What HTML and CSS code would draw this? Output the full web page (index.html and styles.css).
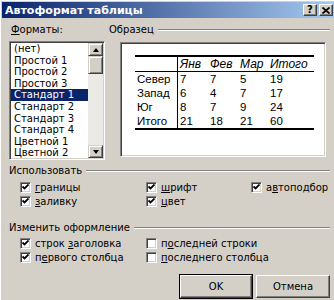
FILE: index.html
```html
<!doctype html>
<html>
<head>
  <link rel="stylesheet" href="styles.css">
</head>
<body>
  <div class="dialog">
    <div class="titlebar">
      <span class="title">Автоформат таблицы</span>
      <div class="tbtns">
        <span class="tbtn help">?</span>
        <span class="tbtn close">
          <svg width="8" height="7" viewBox="0 0 8 7"><path d="M0.5 0.5 L7.5 6.5 M7.5 0.5 L0.5 6.5" stroke="#000" stroke-width="1.7"/></svg>
        </span>
      </div>
    </div>

    <div class="content">
      <div class="top">
        <div class="formats">
          <div class="label"><u>Ф</u>орматы:</div>
          <div class="listbox">
            <ul class="items">
              <li>(нет)</li>
              <li>Простой 1</li>
              <li>Простой 2</li>
              <li>Простой 3</li>
              <li class="selected">Стандарт 1</li>
              <li>Стандарт 2</li>
              <li>Стандарт 3</li>
              <li>Стандарт 4</li>
              <li>Цветной 1</li>
              <li>Цветной 2</li>
            </ul>
            <div class="scrollbar">
              <div class="sbtn"><span class="arrow up"></span></div>
              <div class="thumb"></div>
              <div class="track"></div>
              <div class="sbtn"><span class="arrow down"></span></div>
            </div>
          </div>
        </div>

        <div class="sample">
          <div class="sep label">Образец</div>
          <div class="preview">
            <table class="demo">
              <thead>
                <tr><th></th><th>Янв</th><th>Фев</th><th>Мар</th><th>Итого</th></tr>
              </thead>
              <tbody>
                <tr><td>Север</td><td>7</td><td>7</td><td>5</td><td>19</td></tr>
                <tr><td>Запад</td><td>6</td><td>4</td><td>7</td><td>17</td></tr>
                <tr><td>Юг</td><td>8</td><td>7</td><td>9</td><td>24</td></tr>
                <tr><td>Итого</td><td>21</td><td>18</td><td>21</td><td>60</td></tr>
              </tbody>
            </table>
          </div>
        </div>
      </div>

      <div class="sep use-sep">Использовать</div>
      <div class="checks use">
        <label class="check on"><span class="box"></span><span><u>г</u>раницы</span></label>
        <label class="check on"><span class="box"></span><span><u>ш</u>рифт</span></label>
        <label class="check on"><span class="box"></span><span>а<u>в</u>топодбор</span></label>
        <label class="check on"><span class="box"></span><span><u>з</u>аливку</span></label>
        <label class="check on"><span class="box"></span><span><u>ц</u>вет</span></label>
      </div>

      <div class="sep change-sep">Изменить оформление</div>
      <div class="checks change">
        <label class="check on"><span class="box"></span><span>строк <u>з</u>аголовка</span></label>
        <label class="check"><span class="box"></span><span>п<u>о</u>следней строки</span></label>
        <label class="check on"><span class="box"></span><span>п<u>е</u>рвого столбца</span></label>
        <label class="check"><span class="box"></span><span><u>п</u>оследнего столбца</span></label>
      </div>

      <div class="buttons">
        <button class="btn default">OK</button>
        <button class="btn">Отмена</button>
      </div>
    </div>
  </div>

  <script>
    var boxes = document.querySelectorAll(".check.on .box");
    for (var i = 0; i < boxes.length; i++) {
      boxes[i].innerHTML = '<svg width="7" height="7" viewBox="0 0 7 7"><path d="M0.5 2.5 L2.5 4.5 L6.5 0.5" fill="none" stroke="#000" stroke-width="1.8"/></svg>';
    }
  </script>
</body>
</html>
```

FILE: styles.css
```css
body{
  margin:0;
  background:#d4d0c8;
  font-family:"DejaVu Sans", sans-serif;
  font-size:10px;
  color:#000;
}
u{
  text-decoration:underline;
  text-underline-offset:1px;
}
.dialog{
  width:334px;
  height:300px;
  box-sizing:border-box;
  padding:2px 0 0 2px;
  box-shadow:inset 1px 1px #fff;
  overflow:hidden;
}
.titlebar{
  height:16px;
  display:flex;
  align-items:center;
  justify-content:space-between;
  padding:0 1px 0 3px;
  background:linear-gradient(to right, #0a246a, #a6caf0);
}
.title{
  color:#fff;
  font-weight:bold;
  font-size:11px;
}
.tbtns{
  display:flex;
  gap:2px;
}
.tbtn{
  width:12px;
  height:10px;
  display:flex;
  align-items:center;
  justify-content:center;
  background:#d4d0c8;
  border:1px solid;
  border-color:#fff #404040 #404040 #fff;
  box-shadow:inset -1px -1px #808080;
  font-weight:bold;
  font-size:10px;
  line-height:10px;
}
.content{
  padding:0 4px 0 7px;
}
.top{
  display:flex;
  gap:4px;
}
.formats{
  width:96px;
}
.label{
  height:12px;
  line-height:12px;
  margin-top:6px;
}
.formats .label{
  padding-left:2px;
}
.listbox{
  margin-top:5px;
  height:119px;
  box-sizing:border-box;
  display:flex;
  background:#fff;
  border:1px solid;
  border-color:#808080 #fff #fff #808080;
  box-shadow:inset 1px 1px #404040, inset -1px -1px #d4d0c8;
  padding:1px;
  overflow:hidden;
}
.items{
  list-style:none;
  margin:0;
  padding:0;
  flex:1;
}
.items li{
  height:11.6px;
  line-height:11.6px;
  padding-left:3px;
  white-space:nowrap;
}
.items li.selected{
  background:#0a246a;
  color:#fff;
}
.scrollbar{
  width:15px;
  display:flex;
  flex-direction:column;
}
.sbtn, .thumb{
  box-sizing:border-box;
  background:#d4d0c8;
  border:1px solid;
  border-color:#d4d0c8 #404040 #404040 #d4d0c8;
  box-shadow:inset 1px 1px #fff, inset -1px -1px #808080;
}
.sbtn{
  height:13px;
  display:flex;
  align-items:center;
  justify-content:center;
}
.thumb{
  height:18px;
}
.track{
  flex:1;
  background:#eceae6;
}
.arrow{
  width:0;
  height:0;
  border-left:3.5px solid transparent;
  border-right:3.5px solid transparent;
}
.arrow.up{
  border-bottom:4px solid #000;
}
.arrow.down{
  border-top:4px solid #000;
}
.sample{
  flex:1;
}
.sep{
  display:flex;
  align-items:center;
  gap:4px;
  height:12px;
  line-height:12px;
  white-space:nowrap;
}
.sep::after{
  content:"";
  flex:1;
  border-top:1px solid #808080;
  border-bottom:1px solid #fff;
}
.preview{
  margin:6px 4px 0 11px;
  height:115px;
  box-sizing:border-box;
  background:#fff;
  border:1px solid;
  border-color:#808080 #fff #fff #808080;
  box-shadow:inset 1px 1px #404040, inset -1px -1px #d4d0c8;
  padding:12px 0 0 14px;
}
.demo{
  border-collapse:collapse;
  font-family:"Liberation Sans", Arial, sans-serif;
  font-size:11.5px;
}
.demo th, .demo td{
  padding:0 0 0 2px;
  height:14px;
  line-height:14px;
  text-align:left;
  font-weight:normal;
}
.demo th{
  font-style:italic;
  font-size:12px;
}
.demo thead tr{
  border-top:2px solid #000;
  border-bottom:1px solid #000;
}
.demo tbody tr:last-child{
  border-bottom:2px solid #000;
}
.demo th:first-child, .demo td:first-child{
  width:40px;
  border-right:1px solid #000;
}
.demo th:nth-child(2), .demo th:nth-child(3), .demo th:nth-child(4){
  width:28px;
}
.demo th:nth-child(5){
  width:44px;
}
.use-sep{
  margin-top:5px;
}
.checks{
  display:grid;
  padding-left:11px;
  grid-auto-rows:14px;
}
.checks.use{
  margin-top:3px;
  grid-template-columns:126px 105px 1fr;
}
.change-sep{
  margin-top:14px;
}
.checks.change{
  margin-top:2px;
  grid-template-columns:126px 1fr;
}
.check{
  display:flex;
  align-items:center;
  gap:4px;
  white-space:nowrap;
}
.box{
  width:11px;
  height:11px;
  box-sizing:border-box;
  background:#fff;
  border:1px solid;
  border-color:#808080 #fff #fff #808080;
  box-shadow:inset 1px 1px #404040, inset -1px -1px #d4d0c8;
  display:flex;
  align-items:center;
  justify-content:center;
}
.buttons{
  display:flex;
  justify-content:flex-end;
  gap:4px;
  margin-top:11px;
}
.btn{
  height:23px;
  width:74px;
  background:#d4d0c8;
  font-family:"DejaVu Sans", sans-serif;
  font-size:10px;
  color:#000;
  border:1px solid;
  border-color:#fff #404040 #404040 #fff;
  box-shadow:inset -1px -1px #808080;
  padding:0;
}
.btn.default{
  width:72px;
  outline:1px solid #000;
  outline-offset:0;
}
```
